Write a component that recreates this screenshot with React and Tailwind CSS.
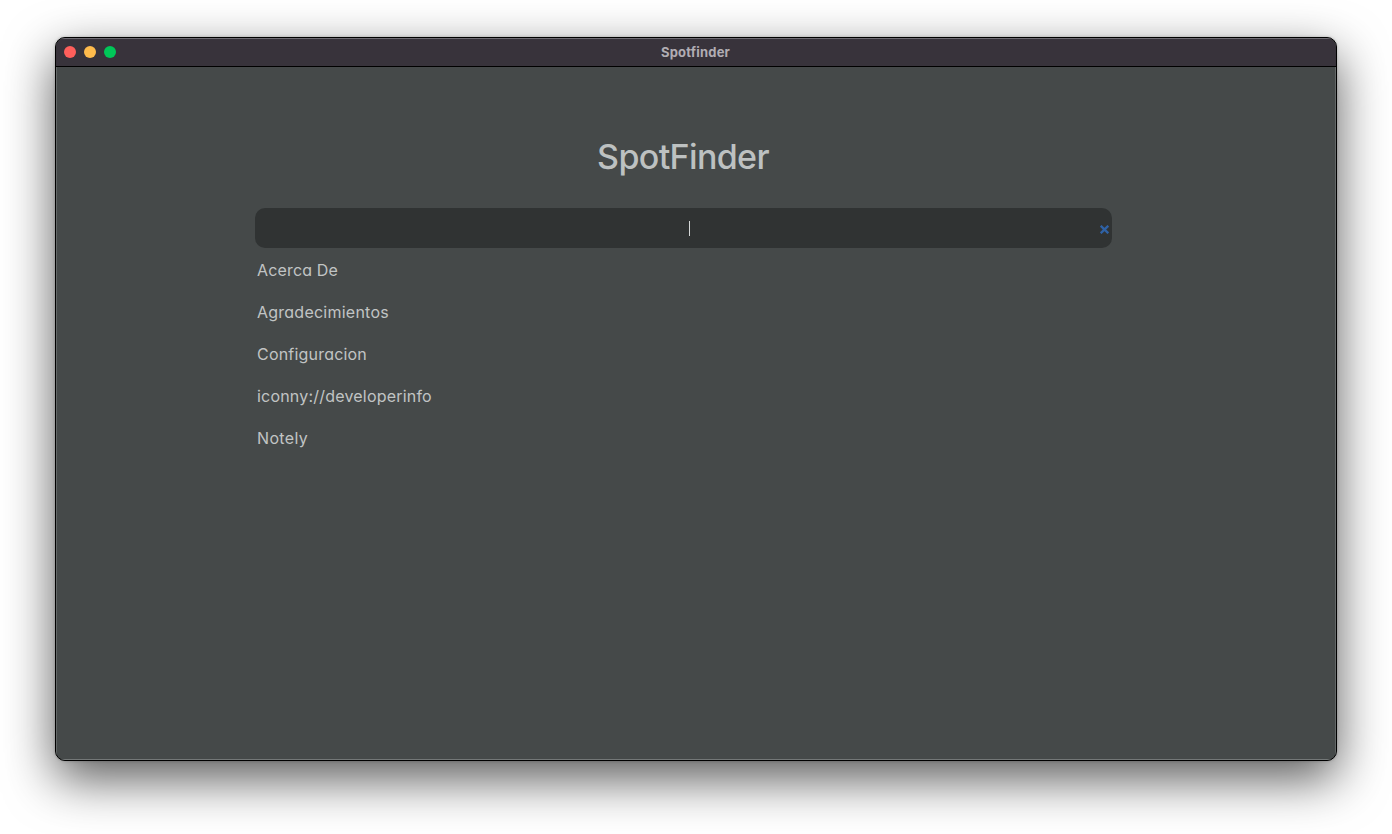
import React from "react";

const results = [
  { label: "Acerca De", spacing: "tracking-[0.16px]" },
  { label: "Agradecimientos", spacing: "tracking-[0.24px]" },
  { label: "Configuracion", spacing: "tracking-[0.2px]" },
  { label: "iconny://developerinfo", spacing: "tracking-[0.2px]" },
  { label: "Notely", spacing: "tracking-[0.36px]" },
];

function TitleBar() {
  return (
    <header className="grid h-7 shrink-0 grid-cols-[1fr_auto_1fr] items-center border-t border-[#6f6c73] bg-[#38333b] pb-0.5">
      <div className="flex gap-2 pl-2">
        <span className="size-3 rounded-full bg-[#ff5f5b]" />
        <span className="size-3 rounded-full bg-[#ffbb4c]" />
        <span className="size-3 rounded-full bg-[#00c758]" />
      </div>
      <h1 className="mr-px text-[13px] leading-4 font-bold tracking-[0.2px] text-[#b1adb3]">Spotfinder</h1>
      <div />
    </header>
  );
}

export default function App() {
  return (
    <div className="h-[834px] w-[1392px] overflow-hidden bg-white px-[55px] pt-[37px] font-['Inter',sans-serif]">
      <main className="flex h-[724px] flex-col overflow-hidden rounded-[10px] border border-black bg-[#454949] shadow-[0_18px_50px_rgba(0,0,0,0.65),0_0_3px_rgba(0,0,0,0.25)]">
        <TitleBar />
        <section className="flex grow flex-col border-x border-b border-x-[#636767] border-b-[#737777] [font-feature-settings:'cv11']">
          <div className="-mx-px h-px bg-black" />
          <div className="ml-[198px] flex w-[857px] flex-col">
            <h2 className="mt-[69px] pr-px text-center text-[34px] leading-[42px] font-medium tracking-[-0.65px] text-[#bdc1c1]">SpotFinder</h2>
            <div className="mt-[30px] flex h-10 items-center rounded-[10px] bg-[#303333]">
              <div className="mt-px ml-[433.5px] h-[15px] w-px bg-[#d5d8d8]" />
              <svg className="mt-[3px] mr-[3px] ml-auto size-[9px]" viewBox="0 0 9 9" fill="none" stroke="#2f62a6" strokeWidth="2.4">
                <path d="M.7 .8 8.3 8.2M8.3 .8 .7 8.2" />
              </svg>
            </div>
            <ul className="flex flex-col pt-[1px] pl-[2px] text-base text-[#c1c4c4]">
              {results.map((item) => (
                <li key={item.label} className="flex h-[42px] items-center">
                  <span className={item.spacing}>{item.label}</span>
                </li>
              ))}
            </ul>
          </div>
        </section>
      </main>
    </div>
  );
}
